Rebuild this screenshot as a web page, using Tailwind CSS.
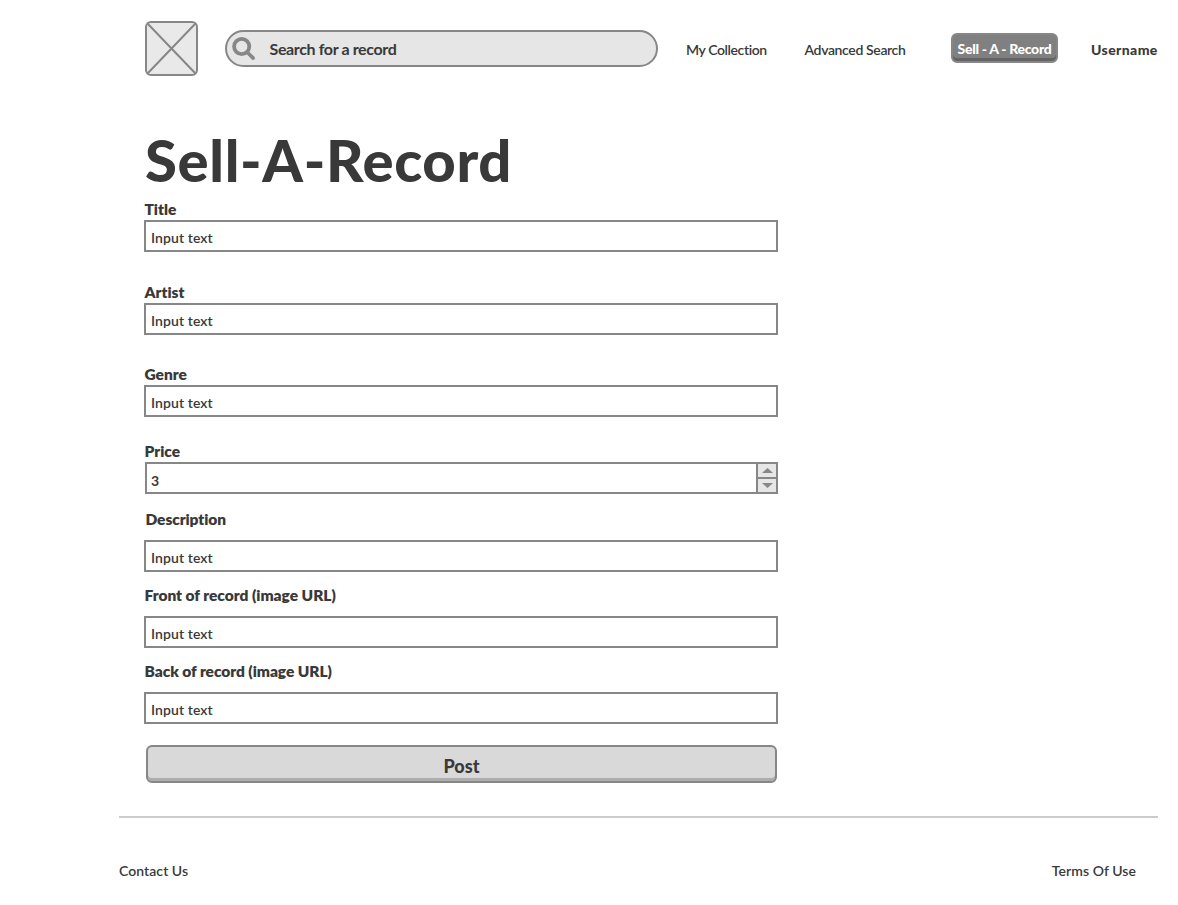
<!DOCTYPE html>
<html lang="en">
<head>
<meta charset="utf-8">
<title>Sell-A-Record</title>
<script src="https://cdn.jsdelivr.net/npm/@tailwindcss/browser@4"></script>
</head>
<body class="bg-white text-[#393939] font-[Lato,sans-serif] font-semibold text-sm leading-5 [font-variant-ligatures:none]">
<div class="w-[1178px] h-[905px] overflow-hidden flex flex-col">
  <header class="flex items-start pl-[145px] pt-[21px] h-[110px] whitespace-nowrap">
    <svg class="w-[53px] h-[55px] shrink-0" viewBox="0 0 53 55" fill="none" stroke="#878787" stroke-width="2">
      <rect x="1" y="1" width="51" height="53" rx="5" fill="#e9e9e9"/>
      <path d="M2.5 2.5 50.5 52.5M50.5 2.5 2.5 52.5"/>
    </svg>
    <div class="ml-[27px] mt-[9px] w-[433px] h-[37px] shrink-0 rounded-full border-2 border-[#878787] bg-[#e6e6e6] flex items-center pl-[5px]">
      <svg class="w-6 h-6 shrink-0" viewBox="0 0 24 24" fill="none" stroke="#878787">
        <circle cx="9.7" cy="9.5" r="7.6" stroke-width="3.8"/>
        <path d="M15.2 15.3l6 5.8" stroke-width="3.6" stroke-linecap="round"/>
      </svg>
      <span class="ml-[13.5px] pt-px text-base leading-5 font-bold tracking-[-0.37px]">Search for a record</span>
    </div>
    <nav class="flex items-start">
      <a class="ml-[28px] mt-[19px] w-[118.5px] tracking-[-0.4px]">My Collection</a>
      <a class="mt-[19px] w-[146.5px] tracking-[-0.36px]">Advanced Search</a>
      <button class="mt-3 w-[107px] h-[30px] rounded-md border-2 border-[#878787] bg-[#808080] shadow-[inset_0_-3px_0_#646464] text-white font-black text-sm leading-5 pt-1 flex justify-center tracking-[-0.3px]">Sell - A - Record</button>
      <a class="ml-[33px] mt-[19px] font-black tracking-[0.4px]">Username</a>
    </nav>
  </header>
  <main class="pl-[144px] flex flex-col items-start w-[778px]">
    <h1 class="h-[89px] pt-[12px] pl-px text-[58px] leading-[76px] font-black whitespace-nowrap tracking-[0.65px]">Sell-A-Record</h1>
    <label class="pl-[0.5px] text-[15.5px] leading-5 font-extrabold">Title</label>
    <div class="mt-px w-full h-8 border-2 border-[#878787] pl-[5px] pt-[6px] tracking-[0.1px]">Input text</div>
    <label class="mt-[30px] pl-[0.5px] text-[15.5px] leading-5 font-extrabold">Artist</label>
    <div class="mt-px w-full h-8 border-2 border-[#878787] pl-[5px] pt-[6px] tracking-[0.1px]">Input text</div>
    <label class="mt-[29px] pl-[0.5px] text-[15.5px] leading-5 font-extrabold">Genre</label>
    <div class="mt-px w-full h-8 border-2 border-[#878787] pl-[5px] pt-[6px] tracking-[0.1px]">Input text</div>
    <label class="mt-[24px] pl-[0.5px] text-[15.5px] leading-5 font-extrabold">Price</label>
    <div class="mt-px w-full pl-px">
      <div class="h-8 border-2 border-[#878787] flex">
        <span class="flex-1 pl-1 pt-[7px] leading-5 font-bold">3</span>
        <div class="w-5 border-l-2 border-[#878787] bg-[#e6e6e6] flex flex-col">
          <div class="h-[15px] border-b-2 border-[#878787] flex items-center justify-center"><svg class="w-[11px] h-[5px]" viewBox="0 0 11 5" fill="#878787"><path d="M5.5 0 11 5H0z"/></svg></div>
          <div class="flex-1 flex items-center justify-center"><svg class="w-[11px] h-[5px]" viewBox="0 0 11 5" fill="#878787"><path d="M5.5 5 11 0H0z"/></svg></div>
        </div>
      </div>
    </div>
    <label class="mt-[15px] pl-[1.5px] text-[15.5px] leading-5 font-extrabold tracking-[-0.08px]">Description</label>
    <div class="mt-[11px] w-full h-8 border-2 border-[#878787] pl-[5px] pt-[6px] tracking-[0.1px]">Input text</div>
    <label class="mt-[13px] pl-[0.5px] text-[15.5px] leading-5 font-extrabold tracking-[-0.02px]">Front of record (image URL)</label>
    <div class="mt-[11px] w-full h-8 border-2 border-[#878787] pl-[5px] pt-[6px] tracking-[0.1px]">Input text</div>
    <label class="mt-[13px] pl-[0.5px] text-[15.5px] leading-5 font-extrabold tracking-[-0.05px]">Back of record (image URL)</label>
    <div class="mt-[11px] w-full h-8 border-2 border-[#878787] pl-[5px] pt-[6px] tracking-[0.1px]">Input text</div>
    <button class="mt-[21px] ml-[2px] w-[631px] h-[38px] rounded-md border-2 border-[#878787] bg-[#d9d9d9] shadow-[inset_0_-3px_0_#adadad] text-lg leading-6 font-black flex justify-center pt-[7px]">Post</button>
  </main>
  <footer class="mt-[33px] ml-[119px] w-[1039px] border-t-2 border-[#cccccc] pt-[43px] pr-[22px] flex justify-between">
    <a class="tracking-[0.06px]">Contact Us</a>
    <a class="tracking-[0.06px]">Terms Of Use</a>
  </footer>
</div>
</body>
</html>
